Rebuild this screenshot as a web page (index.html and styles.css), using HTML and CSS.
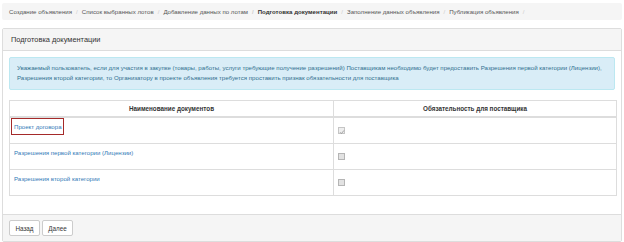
FILE: index.html
```html
<!DOCTYPE html>
<html lang="ru">
<head>
<meta charset="utf-8">
<link rel="stylesheet" href="styles.css">
</head>
<body>
<ol class="crumbs">
  <li>Создание объявления</li>
  <li>Список выбранных лотов</li>
  <li>Добавление данных по лотам</li>
  <li class="active">Подготовка документации</li>
  <li>Заполнение данных объявления</li>
  <li>Публикация объявления</li>
  <li class="empty"></li>
</ol>
<div class="panel">
  <div class="panel-heading">Подготовка документации</div>
  <div class="panel-body">
    <div class="alert">Уважаемый пользователь, если для участия в закупке (товары, работы, услуги требующие получение разрешений) Поставщикам необходимо будет предоставить Разрешения первой категории (Лицензии),<br>Разрешения второй категории, то Организатору в проекте объявления требуется проставить признак обязательности для поставщика</div>
    <table class="docs">
      <thead>
        <tr><th class="c1">Наименование документов</th><th>Обязательность для поставщика</th></tr>
      </thead>
      <tbody>
        <tr><td><span class="marked"><a href="#">Проект договора</a></span></td><td><span class="cb checked"><svg viewBox="0 0 6 6" width="6" height="6"><path d="M1 3.2 L2.4 4.6 L5 1.4" fill="none" stroke="#9a9a9a" stroke-width="0.9"/></svg></span></td></tr>
        <tr><td><a href="#">Разрешения первой категории (Лицензии)</a></td><td><span class="cb"></span></td></tr>
        <tr><td><a href="#">Разрешения второй категории</a></td><td><span class="cb"></span></td></tr>
      </tbody>
    </table>
  </div>
  <div class="panel-footer">
    <button class="btn">Назад</button>
    <button class="btn">Далее</button>
  </div>
</div>
</body>
</html>
```
FILE: styles.css
```css
html, body { background: #fff; }
body {
  margin: 3px 2px 0 2px;
  font-family: "Liberation Sans", Arial, sans-serif;
  font-size: 6.1px;
  color: #333;
}
.crumbs {
  list-style: none;
  margin: 0;
  padding: 0 7px;
  height: 17px;
  line-height: 17px;
  background: #f5f5f5;
  border-radius: 2px;
  display: flex;
  color: #555;
}
.crumbs li + li::before {
  content: "/";
  color: #ccc;
  padding: 0 4px;
}
.crumbs .active { font-weight: bold; color: #333; }
.panel {
  margin-top: 8px;
  border: 1px solid #ddd;
  border-radius: 2px;
  height: 212px;
  display: flex;
  flex-direction: column;
}
.panel-heading {
  height: 21px;
  line-height: 21px;
  padding: 0 8px;
  font-size: 7.4px;
  background: #f5f5f5;
  border-bottom: 1px solid #ddd;
  color: #333;
}
.panel-body {
  padding: 6px 6px 0 6px;
  flex: 1;
}
.alert {
  background: #d9edf7;
  border: 1px solid #bce8f1;
  color: #31708f;
  border-radius: 2px;
  padding: 5px 7px;
  line-height: 10px;
  font-size: 6.1px;
  height: 21px;
  margin-bottom: 10px;
  white-space: nowrap;
}
.docs {
  width: 608px;
  border-collapse: collapse;
  border: 1px solid #ddd;
}
.docs th, .docs td {
  border: 1px solid #ddd;
  padding: 0 4px;
}
.docs th {
  height: 15px;
  font-weight: bold;
  text-align: center;
  font-size: 6.3px;
  border-bottom-width: 2px;
}
.docs th.c1 { width: 315px; }
.docs td {
  height: 26px;
  vertical-align: top;
  padding-top: 5px;
  box-sizing: border-box;
}
.docs td + td { vertical-align: middle; padding-top: 0; }
.docs a { color: #337ab7; text-decoration: none; }
.marked {
  display: inline-block;
  margin: -5px 0 0 -3px;
  padding: 4px 1px 4px 2px;
  border: 1.5px solid #a52a2a;
}
.cb {
  display: inline-block;
  width: 7px;
  height: 7px;
  border: 0.5px solid #b5b5b5;
  background: #e2e2e2;
  margin-top: 0;
  vertical-align: middle;
  box-sizing: border-box;
}
.cb svg { display: block; margin: 0.5px 0 0 0; }
.cb.checked { background: #eee; border-color: #c5c5c5; }
.panel-footer {
  height: 27px;
  box-sizing: border-box;
  background: #f5f5f5;
  border-top: 1px solid #ddd;
  padding: 5px 6px 0 6px;
  display: flex;
  gap: 2px;
  align-items: flex-start;
}
.btn {
  font-family: "Liberation Sans", Arial, sans-serif;
  font-size: 6.3px;
  color: #333;
  background: #fff;
  border: 1px solid #ccc;
  border-radius: 2px;
  width: 31px;
  height: 16px;
  padding: 0;
}
```
